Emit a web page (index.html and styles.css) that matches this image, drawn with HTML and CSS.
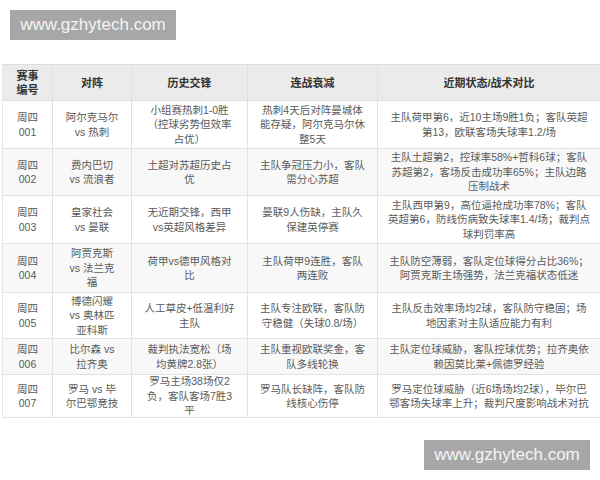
FILE: index.html
```html
<!DOCTYPE html>
<html lang="zh">
<head>
<meta charset="utf-8">
<link rel="stylesheet" href="styles.css">
</head>
<body>
<div class="mark mark-top">www.gzhytech.com</div>
<div class="table">
  <div class="c h">赛事<br>编号</div>
  <div class="c h">对阵</div>
  <div class="c h">历史交锋</div>
  <div class="c h">连战衰减</div>
  <div class="c h">近期状态/战术对比</div>

  <div class="c">周四<br>001</div>
  <div class="c">阿尔克马尔<br>vs 热刺</div>
  <div class="c">小组赛热刺1-0胜<br>（控球劣势但效率<br>占优）</div>
  <div class="c">热刺4天后对阵曼城体<br>能存疑，阿尔克马尔休<br>整5天</div>
  <div class="c">主队荷甲第6，近10主场9胜1负；客队英超<br>第13，欧联客场失球率1.2/场</div>

  <div class="c alt">周四<br>002</div>
  <div class="c alt">费内巴切<br>vs 流浪者</div>
  <div class="c alt">土超对苏超历史占<br>优</div>
  <div class="c alt">主队争冠压力小，客队<br>需分心苏超</div>
  <div class="c alt">主队土超第2，控球率58%+哲科6球；客队<br>苏超第2，客场反击成功率65%；主队边路<br>压制战术</div>

  <div class="c">周四<br>003</div>
  <div class="c">皇家社会<br>vs 曼联</div>
  <div class="c">无近期交锋，西甲<br>vs英超风格差异</div>
  <div class="c">曼联9人伤缺，主队久<br>保建英停赛</div>
  <div class="c">主队西甲第9，高位逼抢成功率78%；客队<br>英超第6，防线伤病致失球率1.4/场；裁判点<br>球判罚率高</div>

  <div class="c alt">周四<br>004</div>
  <div class="c alt">阿贾克斯<br>vs 法兰克<br>福</div>
  <div class="c alt">荷甲vs德甲风格对<br>比</div>
  <div class="c alt">主队荷甲9连胜，客队<br>两连败</div>
  <div class="c alt">主队防空薄弱，客队定位球得分占比36%；<br>阿贾克斯主场强势，法兰克福状态低迷</div>

  <div class="c">周四<br>005</div>
  <div class="c">博德闪耀<br>vs 奥林匹<br>亚科斯</div>
  <div class="c">人工草皮+低温利好<br>主队</div>
  <div class="c">主队专注欧联，客队防<br>守稳健（失球0.8/场）</div>
  <div class="c">主队反击效率场均2球，客队防守稳固；场<br>地因素对主队适应能力有利</div>

  <div class="c alt">周四<br>006</div>
  <div class="c alt">比尔森 vs<br>拉齐奥</div>
  <div class="c alt">裁判执法宽松（场<br>均黄牌2.8张）</div>
  <div class="c alt">主队重视欧联奖金，客<br>队多线轮换</div>
  <div class="c alt">主队定位球威胁，客队控球优势；拉齐奥依<br>赖因莫比莱+佩德罗经验</div>

  <div class="c">周四<br>007</div>
  <div class="c">罗马 vs 毕<br>尔巴鄂竞技</div>
  <div class="c">罗马主场38场仅2<br>负，客队客场7胜3<br>平</div>
  <div class="c">罗马队长缺阵，客队防<br>线核心伤停</div>
  <div class="c">罗马定位球威胁（近6场场均2球），毕尔巴<br>鄂客场失球率上升；裁判尺度影响战术对抗</div>
</div>
<div class="mark mark-bottom">www.gzhytech.com</div>
</body>
</html>
```

FILE: styles.css
```css
html, body {
  margin: 0;
  padding: 0;
  background: #ffffff;
  width: 600px;
  height: 480px;
  overflow: hidden;
  position: relative;
}

body {
  font-family: "Liberation Sans", "Noto Sans CJK SC", sans-serif;
}

.mark {
  width: 166px;
  height: 30px;
  background: #a7a7a7;
  color: #f4f4f4;
  font-family: "Liberation Sans", Arial, sans-serif;
  font-size: 17px;
  line-height: 30px;
  text-align: center;
  box-sizing: border-box;
}

.mark-top {
  margin: 10px 0 0 10px;
}

.mark-bottom {
  position: absolute;
  left: 424px;
  top: 440px;
}

.table {
  margin: 24px 0 0 2px;
  width: 598px;
  display: grid;
  grid-template-columns: 50px 79px 116px 130px 223px;
  grid-template-rows: 36px 48px 47px 48px 49px 46px 36px 43px;
  border-top: 1px solid #dcdcdc;
  border-left: 1px solid #e6e6e6;
  box-sizing: border-box;
}

.c {
  display: flex;
  align-items: center;
  justify-content: center;
  text-align: center;
  font-size: 10.5px;
  line-height: 14.5px;
  color: #5a5a5a;
  border-right: 1px solid #e2e2e2;
  border-bottom: 1px solid #e2e2e2;
  background: #ffffff;
  white-space: nowrap;
  overflow: hidden;
}

.c.alt {
  background: #f8f8f8;
}

.c.h {
  background: #ebebeb;
  color: #333333;
  font-weight: bold;
  font-size: 11px;
  line-height: 14px;
  border-right-color: #e0e0e0;
  border-bottom-color: #dedede;
}
```
